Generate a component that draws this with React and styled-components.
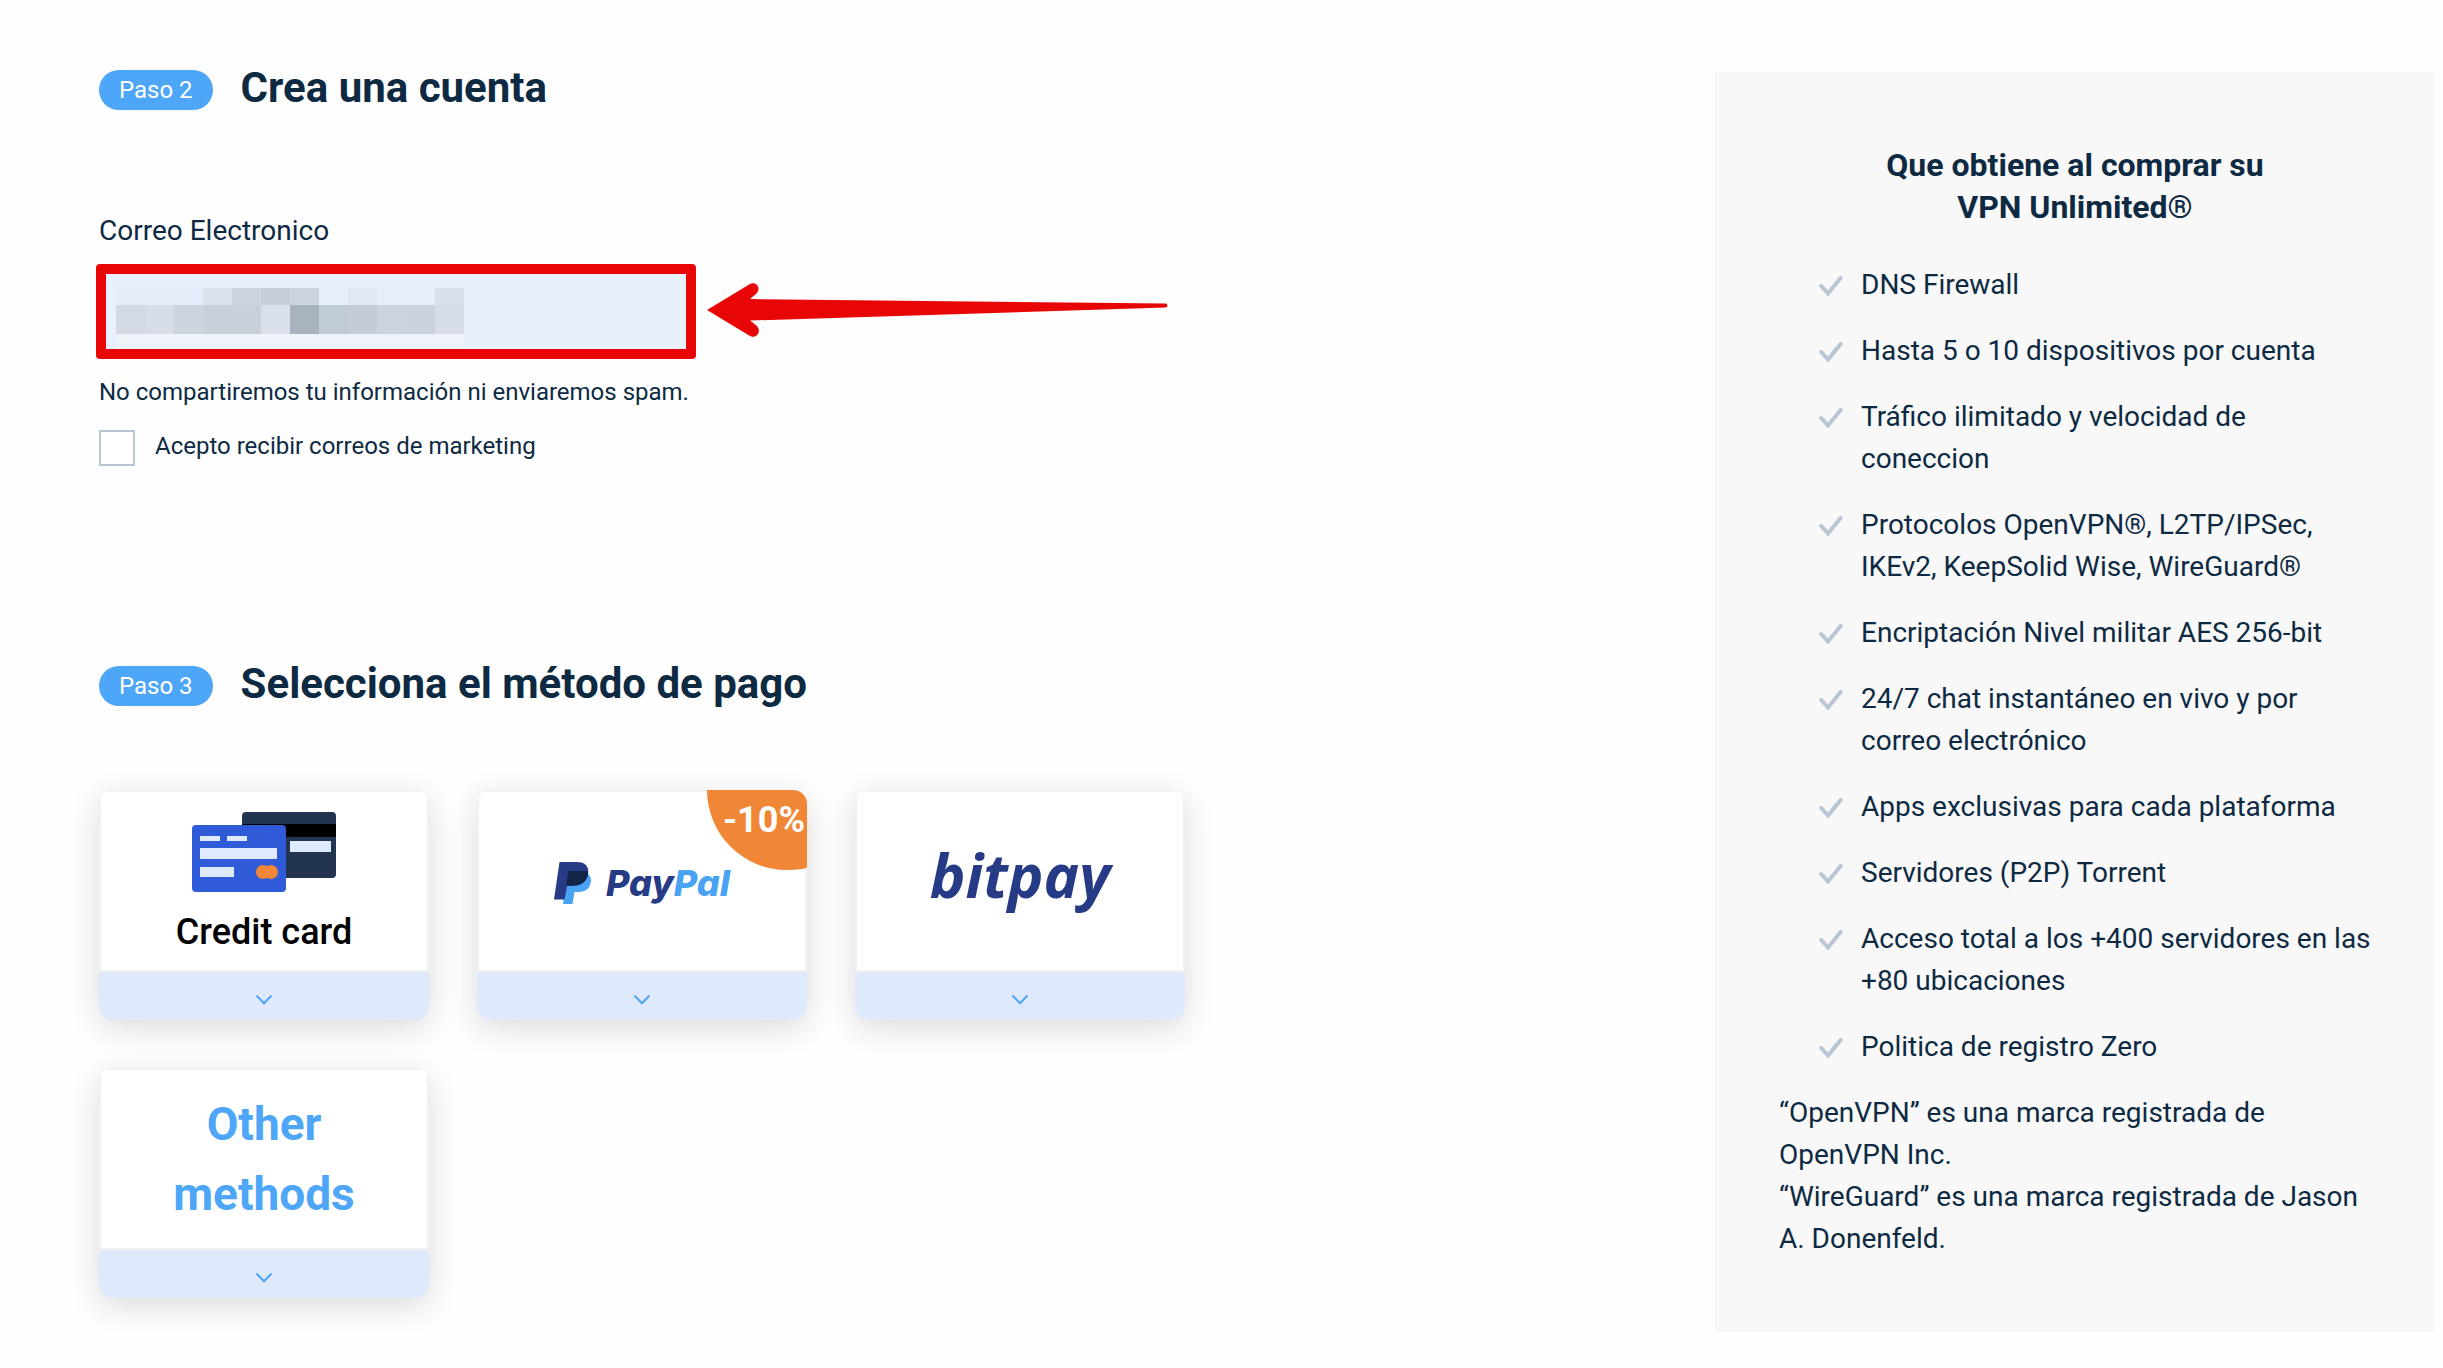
import React from "react";
import styled, { createGlobalStyle } from "styled-components";

const features = [
  "DNS Firewall",
  "Hasta 5 o 10 dispositivos por cuenta",
  "Tráfico ilimitado y velocidad de coneccion",
  "Protocolos OpenVPN®, L2TP/IPSec, IKEv2, KeepSolid Wise, WireGuard®",
  "Encriptación Nivel militar AES 256-bit",
  "24/7 chat instantáneo en vivo y por correo electrónico",
  "Apps exclusivas para cada plataforma",
  "Servidores (P2P) Torrent",
  "Acceso total a los +400 servidores en las +80 ubicaciones",
  "Politica de registro Zero",
];

// one colour per block of the hidden address, row by row
const mosaic = [
  ["#e5ebf8", "#e6ecf9", "#e6ecf9", "#dce2ec", "#ccd4de", "#c6ced9", "#cbd3dd", "#e7edfb", "#e1e8f3", "#e7edfb", "#e7edfb", "#d8dfe9"],
  ["#d3dae5", "#d6dde8", "#ccd4de", "#c8d0da", "#c8d0da", "#d9e0eb", "#a9b3bd", "#c0cbd6", "#c4ccd8", "#cbd3de", "#cad2dc", "#d6dde8"],
  ["#eff3f9", "#eff3f9", "#eff3f9", "#eff3f9", "#eff3f9", "#eff3f9", "#eff3f9", "#eff3f9", "#eff3f9", "#eef2fa", "#eef2fa", "#eef2fa"],
];

const CheckIcon = () => (
  <svg width="24" height="20" viewBox="0 0 24 20" fill="none" aria-hidden="true">
    <path d="M2.2 10 L9 17.5 L21.6 2" stroke="#b9c5d3" strokeWidth="4" strokeLinecap="round" />
  </svg>
);

const ChevronIcon = () => (
  <svg width="18" height="12" viewBox="0 0 18 12" fill="none" aria-hidden="true">
    <path d="M1.5 1.5 L9 9.2 L16.5 1.5" stroke="#4da6f7" strokeWidth="2" />
  </svg>
);

const CardsIcon = () => (
  <svg width="144" height="80" viewBox="0 0 144 80" aria-hidden="true">
    <rect x="50" y="0" width="94" height="66" rx="4" fill="#22344f" />
    <rect x="50" y="12" width="94" height="13" fill="#000" />
    <rect x="98" y="29" width="41" height="11" fill="#dfeafd" />
    <rect x="0" y="13" width="94" height="67" rx="4" fill="#2f5bd8" />
    <path d="M8 24h20v5H8zM35 24h20v5H35zM8 36h77v11H8zM8 55h34v10H8z" fill="#dfeafd" />
    <circle cx="71" cy="60" r="7" fill="#ef8736" />
    <circle cx="79" cy="60" r="7" fill="#ef8736" />
  </svg>
);

const PaypalMark = () => (
  <svg width="38" height="42" viewBox="0 0 38 42" aria-hidden="true">
    <path d="M14 12H34C37 14.500 37.500 18 36.500 21.500C35 28 30 30 24 30H20.500L18.500 42H9Z" fill="#4aa3f2" />
    <path d="M5.500 0H23C31 0 35.500 4.500 34 12C32.500 20 27 24 19 24H13L10.500 37.500H0Z" fill="#273a86" />
    <path d="M14.500 9H33.800C34.200 10 34.200 11 34 12C32.500 20 27 23.500 19 23.500H12Z" fill="#122548" />
  </svg>
);

const PaymentCard = ({ label, discount, children }) => (
  <CardButton type="button" aria-label={label}>
    <CardBody>{children}</CardBody>
    <CardFooter>
      <ChevronIcon />
    </CardFooter>
    {discount && <Discount>{discount}</Discount>}
  </CardButton>
);

const StepHeader = ({ step, title }) => (
  <StepRow>
    <StepBadge>{step}</StepBadge>
    <StepTitle>{title}</StepTitle>
  </StepRow>
);

const App = () => (
  <Page>
    <GlobalStyle />
    <Checkout>
      <StepHeader step="Paso 2" title="Crea una cuenta" />
      <AccountForm>
        <FieldLabel htmlFor="email">Correo Electronico</FieldLabel>
        <Field>
          <EmailInput id="email" type="email" />
          <Mosaic aria-hidden="true">
            {mosaic.flat().map((color, i) => (
              <span key={i} style={{ background: color }} />
            ))}
          </Mosaic>
          <Highlight />
          <Arrow width="464" height="56" viewBox="0 0 464 56" aria-hidden="true">
            <path
              d="M0 28 L43 2 C49 -1 55 6 49 12 L43 17 L459 21.500 Q462 23.500 459 25.500 L43 38.500 L50 44 C55 50 49 57 43 54 Z"
              fill="#e80505"
            />
          </Arrow>
        </Field>
        <Note>No compartiremos tu información ni enviaremos spam.</Note>
        <ConsentLabel>
          <Checkbox type="checkbox" />
          Acepto recibir correos de marketing
        </ConsentLabel>
      </AccountForm>
      <StepHeader step="Paso 3" title="Selecciona el método de pago" />
      <Methods>
        <PaymentCard label="Credit card">
          <CreditCard>
            <CardsIcon />
            Credit card
          </CreditCard>
        </PaymentCard>
        <PaymentCard label="PayPal" discount="-10%">
          <Paypal>
            <PaypalMark />
            <span>
              Pay<em>Pal</em>
            </span>
          </Paypal>
        </PaymentCard>
        <PaymentCard label="bitpay">
          <Bitpay>bitpay</Bitpay>
        </PaymentCard>
        <PaymentCard label="Other methods">
          <OtherMethods>Other methods</OtherMethods>
        </PaymentCard>
      </Methods>
    </Checkout>
    <Benefits>
      <BenefitsTitle>Que obtiene al comprar su VPN Unlimited®</BenefitsTitle>
      <FeatureList>
        {features.map((feature) => (
          <li key={feature}>
            <CheckIcon />
            <span>{feature}</span>
          </li>
        ))}
      </FeatureList>
      <p>“OpenVPN” es una marca registrada de OpenVPN Inc.</p>
      <p>“WireGuard” es una marca registrada de Jason A. Donenfeld.</p>
    </Benefits>
  </Page>
);

const GlobalStyle = createGlobalStyle`
  * {
    box-sizing: border-box;
  }
  body {
    margin: 0;
    background: #fefefe;
    color: #0d2a42;
    font-family: Roboto, "Liberation Sans", sans-serif;
  }
  h2, h3, p, ul {
    margin: 0;
    padding: 0;
  }
  button, input {
    font-family: inherit;
  }
`;

const Page = styled.main`
  display: flex;
  align-items: flex-start;
  justify-content: space-between;
  gap: 48px;
  padding: 0 8px 36px 99px;
`;

const Checkout = styled.section`
  flex: 0 1 1086px;
  padding-top: 64px;
`;

const StepRow = styled.div`
  display: flex;
  align-items: flex-start;
  gap: 28px;
`;

const StepBadge = styled.span`
  margin-top: 6px;
  padding: 0 20px;
  border-radius: 20px;
  background: #4da6f7;
  color: #fff;
  font-size: 24px;
  line-height: 40px;
`;

const StepTitle = styled.h2`
  font-size: 42px;
  font-weight: 700;
  line-height: 48px;
`;

const AccountForm = styled.form`
  display: flex;
  flex-direction: column;
  align-items: flex-start;
  padding: 98px 0 194px;
`;

const FieldLabel = styled.label`
  margin-bottom: 15px;
  font-size: 28px;
  line-height: 42px;
`;

const Field = styled.div`
  position: relative;
  width: 594px;
  height: 89px;
`;

const EmailInput = styled.input`
  width: 100%;
  height: 100%;
  padding: 0 16px;
  border: 2px solid #b9c5d6;
  border-radius: 8px;
  background: #e8effd;
  font-size: 28px;
`;

const Mosaic = styled.div`
  position: absolute;
  top: 21px;
  left: 17px;
  display: grid;
  grid-template-columns: repeat(12, 29px);
  grid-template-rows: 17px 29px 14px;
`;

const Highlight = styled.div`
  position: absolute;
  inset: -3px;
  border: 10px solid #e80505;
  border-radius: 4px;
  pointer-events: none;
`;

const Arrow = styled.svg`
  position: absolute;
  top: 15px;
  left: 608px;
`;

const Note = styled.p`
  margin: 18px 0;
  font-size: 24px;
  line-height: 36px;
`;

const ConsentLabel = styled.label`
  display: flex;
  gap: 20px;
  font-size: 24px;
  line-height: 36px;
`;

const Checkbox = styled.input`
  appearance: none;
  width: 36px;
  height: 36px;
  margin: 2px 0 0;
  border: 2px solid #b9c5d3;
  background: #fff;
`;

const Methods = styled.div`
  display: flex;
  flex-wrap: wrap;
  gap: 48px;
  padding-top: 82px;
`;

const CardButton = styled.button`
  position: relative;
  display: flex;
  flex-direction: column;
  width: 330px;
  height: 230px;
  padding: 0;
  border: 0;
  border-radius: 14px;
  background: #f1f1f1;
  box-shadow: 0 8px 32px rgba(0, 0, 0, 0.14);
  cursor: pointer;
`;

const CardBody = styled.span`
  display: flex;
  flex-direction: column;
  align-items: center;
  justify-content: center;
  align-self: stretch;
  height: 178px;
  margin: 2px;
  border-radius: 6px 6px 0 0;
  background: #fff;
`;

const CardFooter = styled.span`
  display: flex;
  align-items: center;
  justify-content: center;
  align-self: stretch;
  height: 48px;
  padding-top: 8px;
  border-radius: 0 0 14px 14px;
  background: #dfe9fc;
`;

const Discount = styled.span`
  position: absolute;
  top: 0;
  right: 0;
  width: 100px;
  height: 80px;
  padding: 9px 2px 0 0;
  border-radius: 0 14px 20px 80px / 0 14px 3px 80px;
  background: #ef8736;
  color: #fff;
  font-size: 36px;
  font-weight: 700;
  line-height: 42px;
  text-align: right;
`;

const CreditCard = styled.span`
  display: flex;
  flex-direction: column;
  align-items: center;
  gap: 16px;
  padding-top: 6px;
  color: #000;
  font-size: 36px;
  font-weight: 500;
  line-height: 48px;
`;

const Paypal = styled.span`
  display: flex;
  align-items: center;
  gap: 14px;
  padding-top: 4px;
  color: #273a86;
  font: italic 800 36px/42px Inter, sans-serif;
  font-feature-settings: "cv11";

  em {
    color: #4aa3f2;
  }
`;

const Bitpay = styled.span`
  padding-bottom: 12px;
  color: #273a86;
  font: italic 700 60px/72px "Open Sans", sans-serif;
`;

const OtherMethods = styled.span`
  width: 240px;
  color: #4da6f7;
  font-size: 46px;
  font-weight: 700;
  line-height: 70px;
`;

const Benefits = styled.aside`
  flex: 0 1 720px;
  margin-top: 72px;
  padding: 72px 64px;
  background: #f8f8f8;
  font-size: 28px;
  line-height: 42px;
`;

const BenefitsTitle = styled.h3`
  max-width: 400px;
  margin: 0 auto 36px;
  font-size: 32px;
  font-weight: 700;
  text-align: center;
`;

const FeatureList = styled.ul`
  padding-left: 40px;
  list-style: none;

  li {
    display: flex;
    gap: 18px;
    margin-bottom: 24px;
  }

  svg {
    flex: none;
    margin-top: 12px;
  }
`;

export default App;
